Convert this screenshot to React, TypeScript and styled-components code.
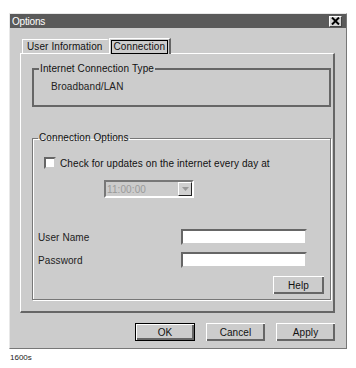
import React from 'react'
import styled, { createGlobalStyle } from 'styled-components'

const GlobalStyle = createGlobalStyle`
  html, body {
    margin: 0;
    padding: 0;
    background: #ffffff;
    font-family: "Liberation Sans", Arial, sans-serif;
  }
`

const Page = styled.div`
  width: 356px;
  height: 368px;
  padding: 13px 0 0 9px;
  box-sizing: border-box;
`

const Dialog = styled.div`
  width: 338px;
  height: 336px;
  box-sizing: border-box;
  background: #cccccc;
  border: 1px solid;
  border-color: #e8e8e8 #777777 #777777 #e8e8e8;
  display: flex;
  flex-direction: column;
`

const TitleBar = styled.div`
  height: 14px;
  background: #5a5a5a;
  color: #ffffff;
  display: flex;
  align-items: center;
  justify-content: space-between;
  padding: 0 4px 0 2px;
  font-size: 10px;
  letter-spacing: -0.2px;
`

const CloseBox = styled.div`
  width: 13px;
  height: 11px;
  box-sizing: border-box;
  background: #d4d4d4;
  border: 1px solid;
  border-color: #ffffff #444444 #444444 #ffffff;
  display: flex;
  align-items: center;
  justify-content: center;
`

const Content = styled.div`
  padding: 9px 11px 0 10px;
  display: flex;
  flex-direction: column;
  font-size: 10px;
  letter-spacing: 0.1px;
`

const TabRow = styled.div`
  display: flex;
  align-items: flex-end;
  padding-left: 2px;
  height: 16px;
`

const Tab = styled.div<{ $active?: boolean }>`
  height: ${p => (p.$active ? 16 : 14)}px;
  box-sizing: border-box;
  padding: 0 ${p => (p.$active ? 1 : 4)}px;
  border-top: 1px solid #ffffff;
  border-left: 1px solid #ffffff;
  border-right: 2px solid ${p => (p.$active ? '#666666' : '#cccccc')};
  font-size: 10px;
  color: #111111;
  display: flex;
  align-items: center;
  margin-bottom: ${p => (p.$active ? -1 : 0)}px;
  background: #cccccc;
  position: relative;
  z-index: ${p => (p.$active ? 1 : 0)};
`

const Focus = styled.span`
  border: 1px solid #000000;
  padding: 0 2px;
  line-height: 12px;
`

const Panel = styled.div`
  height: 260px;
  box-sizing: border-box;
  border-top: 1px solid #ffffff;
  border-left: 1px solid #ffffff;
  border-right: 2px solid #666666;
  border-bottom: 2px solid #666666;
  padding: 8px 2px 0 11px;
  display: flex;
  flex-direction: column;
`

const Group = styled.fieldset<{ $heavy?: boolean; $h: number; $gap?: number }>`
  margin: ${p => p.$gap ?? 0}px 0 0 0;
  height: ${p => p.$h}px;
  box-sizing: border-box;
  border: ${p => (p.$heavy ? '2px solid #666666' : '1px solid #777777')};
  box-shadow: ${p => (p.$heavy ? 'none' : 'inset 1px 1px 0 #ffffff, 1px 1px 0 #ffffff')};
  padding: 0 0 0 5px;
  position: relative;
`

const Legend = styled.legend`
  font-size: 10px;
  color: #111111;
  padding: 0 1px;
  margin-left: 0;
  line-height: 14px;
`

const Plain = styled.div<{ $top: number; $left: number }>`
  color: #222222;
  margin: ${p => p.$top}px 0 0 ${p => p.$left}px;
`

const CheckRow = styled.label`
  display: flex;
  align-items: center;
  gap: 4px;
  margin: 12px 0 0 6px;
  color: #111111;
`

const CheckBox = styled.span`
  width: 12px;
  height: 12px;
  box-sizing: border-box;
  background: #ffffff;
  border: 2px solid;
  border-color: #666666 #cccccc #cccccc #666666;
`

const Select = styled.div`
  margin: 11px 0 0 66px;
  width: 90px;
  height: 18px;
  box-sizing: border-box;
  border: 2px solid;
  border-color: #777777 #ffffff #ffffff #777777;
  display: flex;
  align-items: center;
  justify-content: space-between;
  color: #9a9a9a;
`

const SelectText = styled.span`
  padding-left: 1px;
`

const ArrowBtn = styled.span`
  width: 14px;
  height: 14px;
  box-sizing: border-box;
  border: 1px solid;
  border-color: #ffffff #222222 #222222 #ffffff;
  background: #d0d0d0;
  display: flex;
  align-items: center;
  justify-content: center;
`

const Fields = styled.div`
  margin-top: 31px;
  display: grid;
  grid-template-columns: 143px 126px;
  row-gap: 7px;
  align-items: center;
`

const FieldLabel = styled.span`
  color: #222222;
`

const Input = styled.div`
  height: 16px;
  box-sizing: border-box;
  background: #ffffff;
  border: 2px solid;
  border-color: #666666 #cccccc #cccccc #666666;
`

const HelpRow = styled.div`
  display: flex;
  justify-content: flex-end;
  margin: 8px 6px 0 0;
`

const Button = styled.div<{ $w: number; $default?: boolean }>`
  width: ${p => p.$w}px;
  height: 18px;
  box-sizing: border-box;
  border: ${p => (p.$default ? '1px solid #000000' : '0')};
  box-shadow: inset 1px 1px 0 #ffffff, inset -2px -2px 0 #666666;
  color: #111111;
  display: flex;
  align-items: center;
  justify-content: center;
  background: #cccccc;
`

const ButtonRow = styled.div`
  display: flex;
  justify-content: flex-end;
  gap: 11px;
  margin-top: 10px;
`

const Caption = styled.div`
  font-size: 8px;
  color: #222222;
  margin: 4px 0 0 1px;
`

export default function App() {
  return (
    <Page>
      <GlobalStyle />
      <Dialog>
        <TitleBar>
          <span>Options</span>
          <CloseBox>
            <svg width="9" height="8" viewBox="0 0 9 8">
              <path d="M1 0.5 L8 7.5 M8 0.5 L1 7.5" stroke="#000" strokeWidth="2" />
            </svg>
          </CloseBox>
        </TitleBar>
        <Content>
          <TabRow>
            <Tab>User Information</Tab>
            <Tab $active>
              <Focus>Connection</Focus>
            </Tab>
          </TabRow>
          <Panel>
            <Group $heavy $h={45}>
              <Legend>Internet Connection Type</Legend>
              <Plain $top={5} $left={12}>Broadband/LAN</Plain>
            </Group>
            <Group $h={169} $gap={24}>
              <Legend>Connection Options</Legend>
              <CheckRow>
                <CheckBox />
                Check for updates on the internet every day at
              </CheckRow>
              <Select>
                <SelectText>11:00:00</SelectText>
                <ArrowBtn>
                  <svg width="7" height="4" viewBox="0 0 7 4">
                    <path d="M0 0 H7 L3.5 4 Z" fill="#999" />
                  </svg>
                </ArrowBtn>
              </Select>
              <Fields>
                <FieldLabel>User Name</FieldLabel>
                <Input />
                <FieldLabel>Password</FieldLabel>
                <Input />
              </Fields>
              <HelpRow>
                <Button $w={51}>Help</Button>
              </HelpRow>
            </Group>
          </Panel>
          <ButtonRow>
            <Button $w={60} $default>OK</Button>
            <Button $w={59}>Cancel</Button>
            <Button $w={59}>Apply</Button>
          </ButtonRow>
        </Content>
      </Dialog>
      <Caption>1600s</Caption>
    </Page>
  )
}
